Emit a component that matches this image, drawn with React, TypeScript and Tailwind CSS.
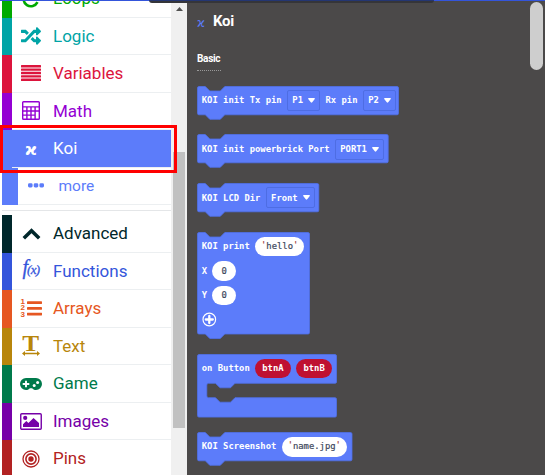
import React from "react";
import { FaRandom } from "react-icons/fa";

function LoopIcon() {
  return (
    <svg width="20" height="20" viewBox="0 0 20 20" fill="none" stroke="currentColor" strokeWidth="2.6">
      <path d="M16.5 14.2A7.4 7.4 0 1 1 15 5.5" />
      <path d="M17 2v6h-6" />
    </svg>
  );
}

function VariablesIcon() {
  return (
    <svg width="20" height="16" viewBox="0 0 20 16" fill="currentColor">
      {[0, 3.4, 6.8, 10.2, 13.6].map((y) => (
        <rect key={y} x="0" y={y} width="20" height="2.4" rx="0.5" />
      ))}
    </svg>
  );
}

function MathIcon() {
  return (
    <svg width="18" height="19" viewBox="0 0 18 19" fill="none" stroke="currentColor" strokeWidth="1.4">
      <rect x="0.7" y="0.7" width="16.6" height="17.6" rx="0.8" />
      <path d="M0.7 5.9h16.6M0.7 10h16.6M0.7 14.1h12M4.9 6v12M9 6v12M13.1 6v12" />
    </svg>
  );
}

function KoiIcon() {
  return <span className="pt-[4px] font-['DejaVu_Sans',sans-serif] text-[16px] leading-none font-bold">ϰ</span>;
}

function MoreIcon() {
  return (
    <svg width="16" height="5" viewBox="0 0 16 5" fill="currentColor">
      <rect x="0" y="0.3" width="4.6" height="4.2" rx="1.4" />
      <rect x="5.7" y="0.3" width="4.6" height="4.2" rx="1.4" />
      <rect x="11.4" y="0.3" width="4.6" height="4.2" rx="1.4" />
    </svg>
  );
}

function ChevronIcon() {
  return (
    <svg className="mt-[2px]" width="19" height="12" viewBox="0 0 19 12" fill="none" stroke="currentColor" strokeWidth="3.6">
      <path d="M1.8 10.2 9.5 2.8l7.7 7.4" />
    </svg>
  );
}

function FunctionIcon() {
  return (
    <span className="flex items-baseline pb-[7px] font-['Liberation_Serif',serif] leading-none italic">
      <span className="text-[20px] leading-none [-webkit-text-stroke:0.3px]">f</span>
      <span className="-ml-px text-[13px] leading-none tracking-[-0.7px] [-webkit-text-stroke:0.3px]">(x)</span>
    </span>
  );
}

function ArraysIcon() {
  return (
    <span className="flex items-center gap-[1px]">
      <span className="flex w-[5px] flex-col font-['Liberation_Sans',sans-serif] text-[8px] leading-[6.5px] font-bold">
        <span>1</span>
        <span>2</span>
        <span>3</span>
      </span>
      <svg width="15" height="15" viewBox="0 0 15 15" fill="currentColor">
        <rect y="0.3" width="15" height="2.7" rx="0.4" />
        <rect y="6" width="15" height="2.7" rx="0.4" />
        <rect y="11.7" width="15" height="2.7" rx="0.4" />
      </svg>
    </span>
  );
}

function TextIcon() {
  return (
    <span className="flex flex-col items-center pt-px font-['Liberation_Serif',serif]">
      <span className="scale-x-110 text-[23px] leading-[15px] font-bold">T</span>
      <svg width="18" height="5" viewBox="0 0 18 5" fill="currentColor">
        <path d="M0 2.5 3 0v1.7h12V0l3 2.5L15 5V3.3H3V5z" />
      </svg>
    </span>
  );
}

function GameIcon() {
  return (
    <svg className="mt-px" width="22" height="12" viewBox="0 0 22 12">
      <path
        d="M6 0H16A6 6 0 0 1 16 12C14.2 12 13 11.2 12.2 10.2H9.8C9 11.2 7.8 12 6 12A6 6 0 0 1 6 0z"
        fill="currentColor"
      />
      <path d="M6 2.7v6.6M2.7 6h6.6" stroke="white" strokeWidth="1.9" />
      <circle cx="14.2" cy="7.6" r="1.5" fill="white" />
      <circle cx="17.6" cy="4.4" r="1.5" fill="white" />
    </svg>
  );
}

function ImagesIcon() {
  return (
    <svg className="mt-px" width="22" height="17" viewBox="0 0 22 17">
      <rect x="0.75" y="0.75" width="20.5" height="15.5" rx="1" fill="none" stroke="currentColor" strokeWidth="1.4" />
      <circle cx="5.2" cy="4.9" r="2.1" fill="currentColor" />
      <path d="M3 14v-2.8l3.3-3.1 2.1 2 5.1-5.2L19 10v4z" fill="currentColor" />
    </svg>
  );
}

function PinsIcon() {
  return (
    <svg className="mt-px" width="18" height="18" viewBox="0 0 18 18" fill="none" stroke="currentColor">
      <circle cx="9" cy="9" r="8" strokeWidth="1.3" />
      <circle cx="9" cy="9" r="5.1" strokeWidth="1.6" />
      <circle cx="9" cy="9" r="2.7" fill="currentColor" stroke="none" />
    </svg>
  );
}

type RowProps = { label: string; icon: React.ReactNode; color: string; selected?: boolean };

function Row({ label, icon, color, selected }: RowProps) {
  return (
    <div className={`flex h-[37.5px] shrink-0 border-l-[10px] border-current ${color}`}>
      <div
        className={`flex flex-1 items-center border-b border-[#eceff1] ${selected ? "bg-[#5c7cfa] text-white" : ""}`}
      >
        <span className="flex w-[38px] shrink-0 justify-center">{icon}</span>
        <span className="pt-[1.5px] pl-[3px] text-[17px]">{label}</span>
      </div>
    </div>
  );
}

function Toolbox() {
  return (
    <div className="flex h-full w-[169px] flex-col overflow-hidden bg-white">
      <div className="-mt-[20px] flex shrink-0 flex-col">
        <Row label="Loops" color="text-[#00aa00]" icon={<LoopIcon />} />
        <Row label="Logic" color="text-[#00a4a6]" icon={<FaRandom size={20} />} />
        <Row label="Variables" color="text-[#dc143c]" icon={<VariablesIcon />} />
        <Row label="Math" color="text-[#9400d3]" icon={<MathIcon />} />
        <Row label="Koi" color="text-[#5c7cfa]" icon={<KoiIcon />} selected />
        <div className="flex h-[37.5px] border-l-[16px] border-[#5c7cfa] text-[#5c7cfa]">
          <div className="flex flex-1 items-center border-b border-[#eceff1]">
            <span className="flex w-[36px] justify-center">
              <MoreIcon />
            </span>
            <span className="pt-px pl-[4.5px] text-[15.5px]">more</span>
          </div>
        </div>
        <div className="mb-[4px] h-[6px] border-b border-[#e4e6e8]" />
        <Row label="Advanced" color="text-[#00272b]" icon={<ChevronIcon />} />
        <Row label="Functions" color="text-[#3455db]" icon={<FunctionIcon />} />
        <Row label="Arrays" color="text-[#e65722]" icon={<ArraysIcon />} />
        <Row label="Text" color="text-[#b8860b]" icon={<TextIcon />} />
        <Row label="Game" color="text-[#007a4b]" icon={<GameIcon />} />
        <Row label="Images" color="text-[#7600a8]" icon={<ImagesIcon />} />
        <Row label="Pins" color="text-[#b22222]" icon={<PinsIcon />} />
      </div>
    </div>
  );
}

const NOTCH = "H8.3L12.8 5H23.3L27.8 0.5";

function Block({ w, h, children }: { w: number; h: number; children: React.ReactNode }) {
  const r = w - 0.5;
  const b = h - 0.5;
  const d = `M2 0.5${NOTCH}H${r - 1.5}Q${r} 0.5 ${r} 2V${b - 1.5}Q${r} ${b} ${r - 1.5} ${b}H27.8L23.3 ${b + 4.5}H12.8L8.3 ${b}H2Q0.5 ${b} 0.5 ${b - 1.5}V2Q0.5 0.5 2 0.5z`;
  return (
    <div className="relative" style={{ width: w, height: h }}>
      <svg className="absolute top-0 left-0 overflow-visible" width={w} height={h}>
        <path d={d} fill="#5c7cfa" stroke="#4f70e8" strokeWidth="0.8" />
      </svg>
      <div className="relative flex flex-col pl-[4.8px]">{children}</div>
    </div>
  );
}

function Line({ children }: { children: React.ReactNode }) {
  return <div className="flex h-[29.3px] items-center gap-[5.2px] whitespace-pre">{children}</div>;
}

function Dropdown({ children, w }: { children: string; w: string }) {
  return (
    <span className={`flex h-[21px] items-center justify-between rounded-[2px] border border-[#4e6de3] px-[4.5px] ${w}`}>
      {children}
      <svg width="7" height="5" viewBox="0 0 7 5" fill="white">
        <path d="M0.8 0H6.2Q7.4 0.2 6.6 1.2L4.2 4.3Q3.5 5 2.8 4.3L0.4 1.2Q-0.4 0.2 0.8 0z" />
      </svg>
    </span>
  );
}

function Pill({ children, w }: { children: React.ReactNode; w: string }) {
  return (
    <span className={`flex h-[19.4px] items-center justify-center rounded-full bg-white font-normal text-[#40485c] [-webkit-text-stroke:0.2px] ${w}`}>
      {children}
    </span>
  );
}

function Quoted({ children }: { children: string }) {
  return (
    <>
      <span className="pb-[3px] text-[#a04040]">'</span>
      {children}
      <span className="pb-[3px] text-[#a04040]">'</span>
    </>
  );
}

function RedPill({ children }: { children: string }) {
  return (
    <span className="flex h-[19.4px] w-[36px] items-center justify-center rounded-full bg-[#bf1131]">{children}</span>
  );
}

function ButtonBlock() {
  return (
    <div className="relative h-[63.6px] w-[140px]">
      <svg className="absolute top-0 left-0" width="140" height="64">
        <path
          d="M2 0.5H138Q139.5 0.5 139.5 2V28Q139.5 29.3 138 29.3H38L33.5 33.8H23L18.5 29.3H11.5Q9.8 29.3 9.8 31V42Q9.8 43.7 11.5 43.7H18.5L23 48.2H33.5L38 43.7H138Q139.5 43.7 139.5 45.2V61.6Q139.5 63.1 138 63.1H2Q0.5 63.1 0.5 61.6V2Q0.5 0.5 2 0.5z"
          fill="#5c7cfa"
          stroke="#4f70e8"
          strokeWidth="0.8"
        />
      </svg>
      <div className="relative pl-[4.8px]">
        <Line>
          <span>on Button</span>
          <RedPill>btnA</RedPill>
          <RedPill>btnB</RedPill>
        </Line>
      </div>
    </div>
  );
}

function Flyout() {
  return (
    <div className="relative flex h-full flex-1 flex-col overflow-hidden bg-[#4b4949] pl-[10px] text-white">
      <div className="mt-[10px] flex h-[22px] items-center">
        <span className="w-[16px] pt-[3px] font-['DejaVu_Sans',sans-serif] text-[12px] leading-none text-[#5c7cfa]">ϰ</span>
        <span className="text-[15px] font-bold tracking-[-0.3px]">Koi</span>
      </div>
      <div className="mt-[18px] h-[21px] w-[24px] border-b border-dotted border-[#999]">
        <span className="block text-[10px] leading-[17px] font-bold tracking-[-0.3px]">Basic</span>
      </div>
      <div className="mt-[14.7px] flex flex-col gap-[19.5px] font-['DejaVu_Sans_Mono',monospace] text-[8.85px] leading-none font-bold">
        <Block w={202} h={29.3}>
          <Line>
            <span>KOI init Tx pin</span>
            <Dropdown w="w-[33.5px]">P1</Dropdown>
            <span>Rx pin</span>
            <Dropdown w="w-[33.5px]">P2</Dropdown>
          </Line>
        </Block>
        <Block w={191.7} h={29.3}>
          <Line>
            <span>KOI init powerbrick Port</span>
            <Dropdown w="w-[49.5px]">PORT1</Dropdown>
          </Line>
        </Block>
        <Block w={122.3} h={29.3}>
          <Line>
            <span>KOI LCD Dir</span>
            <Dropdown w="w-[49.5px]">Front</Dropdown>
          </Line>
        </Block>
        <Block w={113} h={102.5}>
          <Line>
            <span>KOI print</span>
            <Pill w="w-[49.5px]">
              <Quoted>hello</Quoted>
            </Pill>
          </Line>
          <div className="flex h-[19.4px] items-center gap-[5px]">
            <span>X</span>
            <Pill w="w-[24px]">0</Pill>
          </div>
          <div className="mt-[5px] flex h-[19.4px] items-center gap-[5px]">
            <span>Y</span>
            <Pill w="w-[24px]">0</Pill>
          </div>
          <svg className="mt-[7px]" width="15" height="15" viewBox="0 0 15 15" fill="none" stroke="white">
            <circle cx="7.3" cy="7.5" r="6.3" strokeWidth="1.2" />
            <path d="M7.3 4v7M3.8 7.5h7" strokeWidth="2.3" strokeLinecap="round" />
          </svg>
        </Block>
        <ButtonBlock />
        <div className="-mt-[5px]">
          <Block w={155.5} h={29.3}>
            <Line>
              <span>KOI Screenshot</span>
              <Pill w="w-[65.5px]">
                <Quoted>name.jpg</Quoted>
              </Pill>
            </Line>
          </Block>
        </div>
      </div>
      <div className="absolute top-[2px] right-[2px] h-[68px] w-[13px] rounded-full bg-[#cecece]" />
    </div>
  );
}

export default function App() {
  return (
    <div className="relative flex h-[475px] w-[545px] overflow-hidden bg-white pl-[2px] font-['Roboto',sans-serif]">
      <Toolbox />
      <div className="flex h-full w-[16px] flex-col items-center bg-[#f0f0f0]">
        <svg className="mt-[7px]" width="7" height="4" viewBox="0 0 7 4" fill="#505050">
          <path d="M3.5 0 7 4H0z" />
        </svg>
        <div className="mt-[141px] h-[276px] w-[12px] bg-[#c1c1c1]" />
      </div>
      <Flyout />
      <div className="absolute top-0 left-0 h-px w-full bg-[#3455db]" />
      <div className="absolute top-0 left-[149px] h-[3px] w-[285px] rounded-b-[4px] border-t border-[#243672] bg-[#353539]" />
      <div className="absolute top-[125px] left-0 h-[47.5px] w-[177px] border-[3px] border-[#ff0000]" />
    </div>
  );
}
